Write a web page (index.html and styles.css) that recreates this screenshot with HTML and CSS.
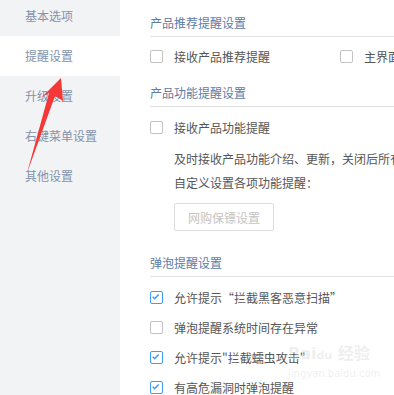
FILE: index.html
```html
<!DOCTYPE html>
<html lang="zh-CN">
 <head>
  <meta charset="utf-8"/>
  <title>设置中心 | 提醒设置</title>
  <link rel="stylesheet" href="styles.css">
 </head>
 <body>
  <aside class="side">
   <a class="side-item">基本选项</a>
   <a class="side-item active">提醒设置</a>
   <a class="side-item">升级设置</a>
   <a class="side-item">右键菜单设置</a>
   <a class="side-item">其他设置</a>
  </aside>

  <main class="panel">
   <section class="group first">
    <h2>产品推荐提醒设置</h2>
    <div class="row two">
     <label class="opt"><span class="box"></span>接收产品推荐提醒</label>
     <label class="opt"><span class="box"></span>主界面推荐提醒</label>
    </div>
   </section>

   <section class="group">
    <h2>产品功能提醒设置</h2>
    <div class="row">
     <label class="opt"><span class="box"></span>接收产品功能提醒</label>
    </div>
    <p class="note top">及时接收产品功能介绍、更新，关闭后所有功能提醒将不再接收</p>
    <p class="note">自定义设置各项功能提醒：</p>
    <button class="btn">网购保镖设置</button>
   </section>

   <section class="group">
    <h2>弹泡提醒设置</h2>
    <div class="row">
     <label class="opt"><span class="box on"><svg viewBox="0 0 13 13"><path d="M3 6.6 L5.4 9 L10 4"/></svg></span>允许提示“拦截黑客恶意扫描”</label>
    </div>
    <div class="row">
     <label class="opt"><span class="box"></span>弹泡提醒系统时间存在异常</label>
    </div>
    <div class="row">
     <label class="opt"><span class="box on"><svg viewBox="0 0 13 13"><path d="M3 6.6 L5.4 9 L10 4"/></svg></span>允许提示"拦截蠕虫攻击"</label>
    </div>
    <div class="row">
     <label class="opt"><span class="box on"><svg viewBox="0 0 13 13"><path d="M3 6.6 L5.4 9 L10 4"/></svg></span>有高危漏洞时弹泡提醒</label>
    </div>
   </section>
  </main>

  <!-- 红色箭头标注 -->
  <svg class="arrow" viewBox="0 0 394 395">
   <polygon points="61,78 63,101 55,96 27,173 49,93 42,97"/>
  </svg>

  <div class="mark">
   <span class="mark-logo">Bai<b>du</b> 经验</span>
   <span class="mark-url">jingyan.baidu.com</span>
  </div>
 </body>
</html>
```

FILE: styles.css
```css
:root {
  --side-bg: #f2f3f5;
  --side-fg: #8492aa;
  --title: #5c7ba6;
  --text: #555;
  --line: #e2e2e2;
  --blue: #3f9bf3;
  --font: "Noto Sans CJK SC", "Noto Sans", sans-serif;
}

* {
  margin: 0;
  padding: 0;
  box-sizing: border-box;
}

html, body {
  width: 394px;
  height: 395px;
  overflow: hidden;
}

body {
  display: flex;
  font-family: var(--font);
  font-size: 12px;
  background: #fff;
  position: relative;
}

/* 左侧菜单 */
.side {
  width: 120px;
  flex: none;
  background: var(--side-bg);
  display: flex;
  flex-direction: column;
  margin-top: -4px;
}

.side-item {
  height: 40px;
  line-height: 40px;
  padding-left: 25px;
  color: var(--side-fg);
  white-space: nowrap;
}

.side-item.active {
  background: #fff;
}

/* 右侧设置 */
.panel {
  flex: 1;
  padding-left: 30px;
  min-width: 0;
  overflow: hidden;
}

.group h2 {
  font-size: 12px;
  font-weight: normal;
  color: var(--title);
  line-height: 20px;
  padding-bottom: 3px;
  border-bottom: 1px solid var(--line);
  margin-bottom: 5px;
  white-space: nowrap;
}

.group.first {
  padding-top: 13px;
}

.group.first h2 {
  margin-bottom: 4px;
}

.group + .group {
  margin-top: 12px;
}

.group + .group + .group {
  margin-top: 22px;
}

.row {
  height: 30px;
  display: flex;
  align-items: center;
  white-space: nowrap;
}

.row.two .opt:first-child {
  width: 190px;
  flex: none;
}

.opt {
  display: flex;
  align-items: center;
  color: var(--text);
  white-space: nowrap;
}

.box {
  width: 13px;
  height: 13px;
  border: 1px solid #c3c3c3;
  border-radius: 2px;
  margin-right: 11px;
  flex: none;
  display: flex;
}

.box.on {
  border-color: var(--blue);
}

.box svg {
  width: 11px;
  height: 11px;
}

.box path {
  fill: none;
  stroke: var(--blue);
  stroke-width: 1.8;
  transform: translate(-1px, -1px);
}

.note {
  padding-left: 24px;
  line-height: 24px;
  color: var(--text);
  white-space: nowrap;
}

.note.top {
  margin-top: 5px;
}

.btn {
  display: block;
  margin: 8px 0 0 24px;
  width: 100px;
  height: 28px;
  background: #fff;
  border: 1px solid #dcdcdc;
  border-radius: 2px;
  color: #c4c4c4;
  font-family: var(--font);
  font-size: 12px;
}

/* 标注箭头 */
.arrow {
  position: absolute;
  top: 0;
  left: 0;
  width: 394px;
  height: 395px;
  pointer-events: none;
}

.arrow polygon {
  fill: #f43838;
}

/* 水印 */
.mark {
  position: absolute;
  left: 288px;
  top: 343px;
  display: flex;
  flex-direction: column;
  color: rgba(220, 220, 220, 0.45);
  pointer-events: none;
  font-family: "DejaVu Sans", var(--font);
}

.mark-logo {
  font-size: 16px;
  font-weight: bold;
  line-height: 22px;
}

.mark-logo b {
  font-size: 11px;
}

.mark-url {
  font-size: 10px;
  line-height: 13px;
}
```
